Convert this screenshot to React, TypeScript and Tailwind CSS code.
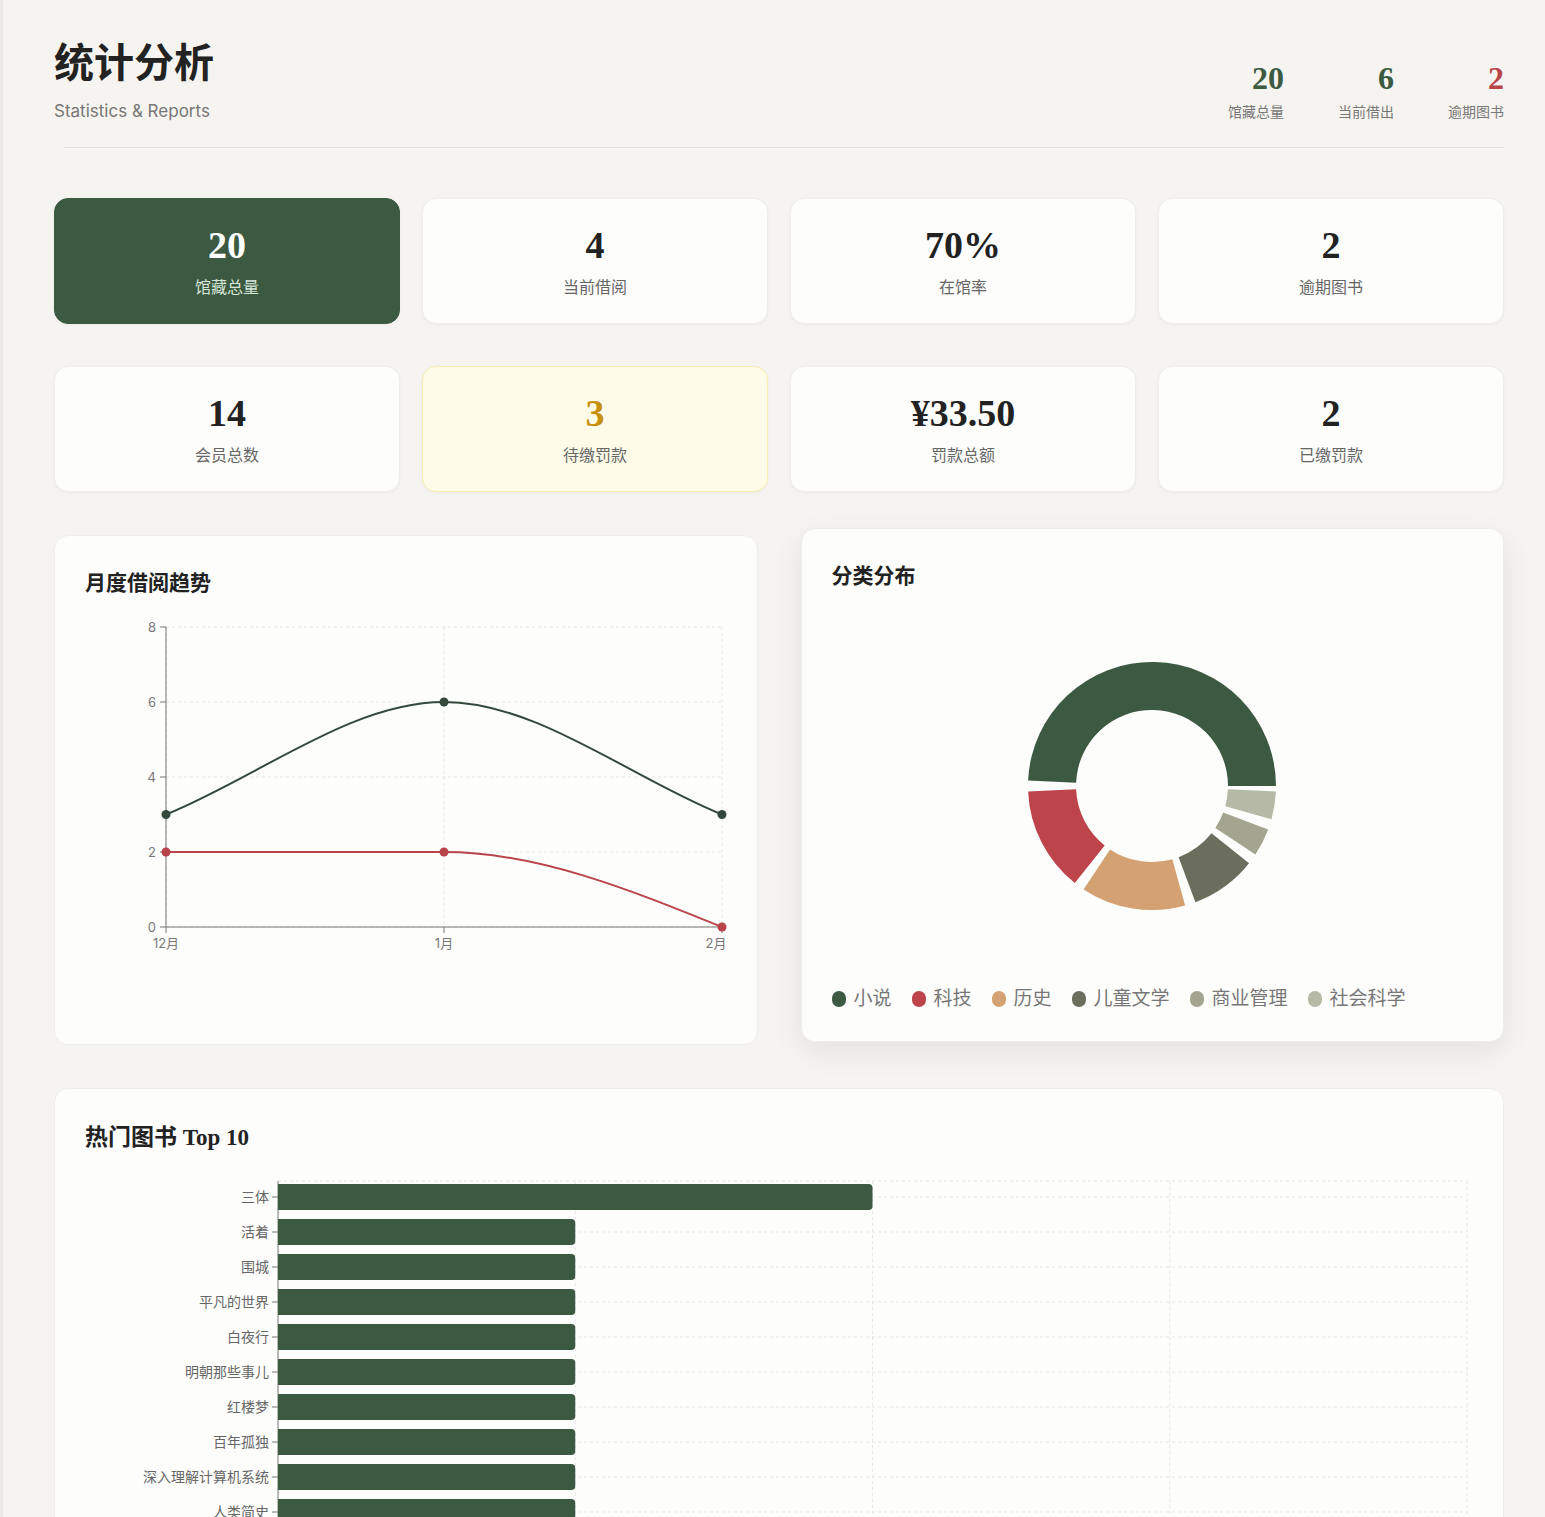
import React from "react";

const serif = { fontFamily: '"Liberation Serif", "Noto Sans CJK SC", serif' };
const sans = { fontFamily: 'Inter, "Noto Sans CJK SC", sans-serif' };

const stats = [
  { value: "20", label: "馆藏总量", kind: "primary" },
  { value: "4", label: "当前借阅" },
  { value: "70%", label: "在馆率" },
  { value: "2", label: "逾期图书" },
  { value: "14", label: "会员总数" },
  { value: "3", label: "待缴罚款", kind: "warn" },
  { value: "¥33.50", label: "罚款总额" },
  { value: "2", label: "已缴罚款" },
];

const categories = [
  { name: "小说", value: 10, color: "#3b5a41" },
  { name: "科技", value: 3, color: "#bd444a" },
  { name: "历史", value: 3, color: "#d4a272" },
  { name: "儿童文学", value: 2, color: "#6b6e5c" },
  { name: "商业管理", value: 1, color: "#a3a590" },
  { name: "社会科学", value: 1, color: "#b7b9a7" },
];

const books = ["三体", "活着", "围城", "平凡的世界", "白夜行", "明朝那些事儿", "红楼梦", "百年孤独", "深入理解计算机系统", "人类简史"];

function StatCard({ value, label, kind }: { value: string; label: string; kind?: string }) {
  const box =
    kind === "primary"
      ? "bg-[#3b5a41] border-[#3b5a41]"
      : kind === "warn"
      ? "bg-[#fefbe8] border-[#f7eeb0]"
      : "bg-[#fdfdfc] border-[#f0eeea]";
  const num = kind === "primary" ? "text-white" : kind === "warn" ? "text-[#c8900f]" : "text-[#222]";
  const lab = kind === "primary" ? "text-[#d8e6d8]" : "text-[#666]";
  return (
    <div className={`h-[126px] rounded-[14px] border flex flex-col items-center justify-center shadow-[0_1px_3px_rgba(0,0,0,0.04)] ${box}`}>
      <div className={`text-[38px] leading-[44px] font-bold ${num}`} style={serif}>{value}</div>
      <div className={`mt-[8px] text-[16px] ${lab}`} style={sans}>{label}</div>
    </div>
  );
}

function LineChart() {
  const ys = [0, 2, 4, 6, 8];
  const y = (v: number) => 309 - v * 37.5;
  const xs = [81, 359, 637];
  return (
    <svg width="643" height="340" className="block">
      {ys.map((v) => (
        <line key={v} x1="81" x2="637" y1={y(v)} y2={y(v)} stroke="#e6e6e6" strokeDasharray="3 3" />
      ))}
      {xs.map((x) => (
        <line key={x} x1={x} x2={x} y1="9" y2="309" stroke="#e6e6e6" strokeDasharray="3 3" />
      ))}
      <line x1="81" x2="81" y1="9" y2="309" stroke="#777" />
      <line x1="81" x2="637" y1="309" y2="309" stroke="#777" />
      {ys.map((v) => (
        <g key={v}>
          <line x1="75" x2="81" y1={y(v)} y2={y(v)} stroke="#777" />
          <text x="71" y={y(v) + 5} textAnchor="end" fontSize="13" fill="#777" style={sans}>{v}</text>
        </g>
      ))}
      {["12月", "1月", "2月"].map((m, i) => (
        <g key={m}>
          <line x1={xs[i]} x2={xs[i]} y1="309" y2="315" stroke="#777" />
          <text x={i === 2 ? xs[i] - 6 : xs[i]} y="330" textAnchor="middle" fontSize="13" fill="#777" style={sans}>{m}</text>
        </g>
      ))}
      <path d="M81,196.5 C173.7,159 266.3,84 359,84 C451.7,84 544.3,159 637,196.5" fill="none" stroke="#34493b" strokeWidth="2" />
      <path d="M81,234 L359,234 C451.7,234 544.3,271.5 637,309" fill="none" stroke="#b9434a" strokeWidth="2" />
      {[[81, 196.5], [359, 84], [637, 196.5]].map(([cx, cy]) => (
        <circle key={cx} cx={cx} cy={cy} r="4.5" fill="#34493b" />
      ))}
      {[[81, 234], [359, 234], [637, 309]].map(([cx, cy]) => (
        <circle key={cx} cx={cx} cy={cy} r="4.5" fill="#b9434a" />
      ))}
    </svg>
  );
}

function Donut() {
  const cx = 200, cy = 130, R = 124, r = 76, pad = 5;
  const total = categories.reduce((s, c) => s + c.value, 0);
  const pt = (a: number, rad: number) => {
    const t = (a * Math.PI) / 180;
    return [cx + rad * Math.cos(t), cy - rad * Math.sin(t)];
  };
  let start = 0;
  const arcs = categories.map((c) => {
    const sweep = (c.value / total) * 360;
    const a0 = start + (start === 0 ? 0 : pad / 2);
    const a1 = start + sweep - pad / 2;
    start += sweep;
    const [x0, y0] = pt(a0, R);
    const [x1, y1] = pt(a1, R);
    const [x2, y2] = pt(a1, r);
    const [x3, y3] = pt(a0, r);
    const large = a1 - a0 > 180 ? 1 : 0;
    const d = `M${x0},${y0} A${R},${R} 0 ${large} 0 ${x1},${y1} L${x2},${y2} A${r},${r} 0 ${large} 1 ${x3},${y3} Z`;
    return <path key={c.name} d={d} fill={c.color} />;
  });
  return (
    <svg width="400" height="260" className="block mx-auto">
      {arcs}
    </svg>
  );
}

function BarChart() {
  const x0 = 193, unit = 297.25;
  const top = 92 - 16;
  return (
    <svg width="1389" height="440" className="block">
      {[1, 2, 3, 4].map((v) => (
        <line key={v} x1={x0 + v * unit} x2={x0 + v * unit} y1={top} y2="440" stroke="#e6e6e6" strokeDasharray="3 3" />
      ))}
      <line x1={x0} x2={x0 + 4 * unit} y1={top} y2={top} stroke="#e6e6e6" strokeDasharray="3 3" />
      {books.map((b, i) => {
        const cy = 92 + i * 35;
        return <line key={b} x1={x0} x2={x0 + 4 * unit} y1={cy} y2={cy} stroke="#e6e6e6" strokeDasharray="3 3" />;
      })}
      <line x1={x0} x2={x0} y1={top} y2="440" stroke="#777" />
      {books.map((b, i) => {
        const cy = 92 + i * 35;
        const w = (i === 0 ? 2 : 1) * unit;
        return (
          <g key={b}>
            <line x1={x0 - 6} x2={x0} y1={cy} y2={cy} stroke="#777" />
            <text x={x0 - 9} y={cy + 5} textAnchor="end" fontSize="14" fill="#666" style={sans}>{b}</text>
            <path d={`M${x0},${cy - 13} H${x0 + w - 4} Q${x0 + w},${cy - 13} ${x0 + w},${cy - 9} V${cy + 9} Q${x0 + w},${cy + 13} ${x0 + w - 4},${cy + 13} H${x0} Z`} fill="#3b5a41" />
          </g>
        );
      })}
    </svg>
  );
}

export default function App() {
  return (
    <div className="min-h-[1517px] bg-[#f6f4f0] border-l-[3px] border-[#ebe9e4] pl-[51px] pr-[41px] pt-[38px]" style={sans}>
      <div className="flex items-start justify-between">
        <div>
          <h1 className="text-[40px] leading-[52px] font-bold text-[#222]" style={serif}>统计分析</h1>
          <p className="mt-[9px] text-[17px] text-[#777]">Statistics &amp; Reports</p>
        </div>
        <div className="flex gap-[50px] pt-[21px]">
          {[
            ["20", "馆藏总量", "text-[#3b5a41]"],
            ["6", "当前借出", "text-[#3b5a41]"],
            ["2", "逾期图书", "text-[#b9434a]"],
          ].map(([v, l, c]) => (
            <div key={l} className="w-[60px] flex flex-col items-end">
              <div className={`text-[32px] leading-[38px] font-bold ${c}`} style={serif}>{v}</div>
              <div className="text-[14px] text-[#777] mt-[4px]">{l}</div>
            </div>
          ))}
        </div>
      </div>
      <div className="mt-[22px] ml-[10px] h-px bg-[#e6e3de]" />

      <div className="mt-[50px] grid grid-cols-4 gap-x-[22px] gap-y-[42px]">
        {stats.map((s, i) => (
          <StatCard key={i} {...s} />
        ))}
      </div>

      <div className="mt-[36px] grid grid-cols-2 gap-[43px] items-start">
        <div className="mt-[7px] h-[510px] rounded-[14px] bg-[#fdfdfc] border border-[#f0eeea] px-[30px] pt-[32px]">
          <h2 className="text-[21px] font-bold text-[#222]" style={serif}>月度借阅趋势</h2>
          <div className="mt-[19px]">
            <LineChart />
          </div>
        </div>
        <div className="h-[514px] rounded-[14px] bg-[#fdfdfc] border border-[#f0eeea] shadow-[0_10px_30px_rgba(0,0,0,0.08)] px-[30px] pt-[32px]">
          <h2 className="text-[21px] font-bold text-[#222]" style={serif}>分类分布</h2>
          <div className="mt-[64px]">
            <Donut />
          </div>
          <div className="mt-[69px] flex gap-[20px] text-[19px] text-[#777]">
            {categories.map((c) => (
              <div key={c.name} className="flex items-center gap-[8px]">
                <span className="w-[14px] h-[16px] rounded-full" style={{ backgroundColor: c.color }} />
                {c.name}
              </div>
            ))}
          </div>
        </div>
      </div>

      <div className="mt-[43px] h-[440px] overflow-hidden rounded-t-[14px] bg-[#fdfdfc] border border-[#f0eeea] px-[30px] pt-[32px]">
        <h2 className="text-[23px] font-bold text-[#222]" style={serif}>热门图书 Top 10</h2>
        <div className="-mt-[50px]">
          <BarChart />
        </div>
      </div>
    </div>
  );
}
